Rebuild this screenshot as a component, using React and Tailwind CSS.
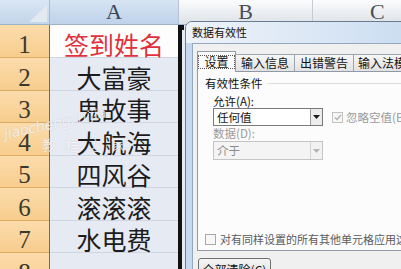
import React from 'react';

const rows = [
  { n: '1', name: '签到姓名', h: 'h-[33px]', first: true },
  { n: '2', name: '大富豪', h: 'h-[33px]' },
  { n: '3', name: '鬼故事', h: 'h-[32px]' },
  { n: '4', name: '大航海', h: 'h-[33px]' },
  { n: '5', name: '四风谷', h: 'h-[32px]' },
  { n: '6', name: '滚滚滚', h: 'h-[33px]' },
  { n: '7', name: '水电费', h: 'h-[32px]' },
  { n: '8', name: '', h: 'h-[33px]' },
];

const tabs = ['输入信息', '出错警告', '输入法模式'];

function Arrow({ disabled }) {
  return (
    <div
      className={
        'w-[12px] flex items-center justify-center border-l ' +
        (disabled ? 'border-[#d6d6d6] bg-[#f2f2f2]' : 'border-[#9a9a9a] bg-[#ececec]')
      }
    >
      <svg width="7" height="4" viewBox="0 0 7 4">
        <path d="M0 0h7L3.5 4z" fill={disabled ? '#b5b5b5' : '#1a1a1a'} />
      </svg>
    </div>
  );
}

export default function App() {
  return (
    <div className="relative w-[401px] h-[269px] overflow-hidden bg-white font-['Noto_Sans_CJK_SC',sans-serif]">
      {/* Sheet header */}
      <div className="flex h-[25px] border-b border-[#9eb1c8]">
        <div className="relative w-[50px] border-r border-[#a8bcd3] bg-gradient-to-b from-[#d9e6f4] to-[#c3d5ea]">
          <svg className="absolute right-[2px] bottom-[2px]" width="18" height="17" viewBox="0 0 18 17">
            <path d="M18 0V17H0z" fill="#e3e9f0" />
          </svg>
        </div>
        <div className="w-[129px] border-r border-[#b4c4d6] bg-gradient-to-b from-[#d7e4f3] to-[#bed2ea] flex items-center justify-center font-['Liberation_Serif',serif] text-[22px] leading-none text-[#3b4654]">
          A
        </div>
        <div className="w-[134px] border-r border-[#c8ccd2] bg-gradient-to-b from-[#fbfcfd] to-[#dde2e8] flex items-center justify-center font-['Liberation_Serif',serif] text-[22px] leading-none text-[#4a4f56]">
          B
        </div>
        <div className="flex-1 bg-gradient-to-b from-[#fbfcfd] to-[#dde2e8] flex items-center pl-[57px] font-['Liberation_Serif',serif] text-[22px] leading-none text-[#4a4f56]">
          C
        </div>
      </div>

      {/* Sheet body */}
      <div className="flex">
        <div className="w-[50px] flex flex-col border-r border-[#7d6a4c]">
          {rows.map((r) => (
            <div
              key={r.n}
              className={
                r.h +
                ' flex items-end justify-center border-b border-[#dcab63] bg-gradient-to-b from-[#fcdcab] to-[#f7cd8e] font-[\'Liberation_Serif\',serif] text-[25px] leading-none text-[#3a3a2c]'
              }
            >
              {r.n}
            </div>
          ))}
        </div>
        <div className="w-[128px] flex flex-col">
          {rows.map((r) => (
            <div
              key={r.n}
              className={
                r.h +
                ' flex items-end justify-center border-b border-[#cfd6e2] text-[25px] leading-none ' +
                (r.first ? 'bg-[#fdfdfd] text-[#e0313c]' : 'bg-[#e6eaf3] text-[#1c1c1c]')
              }
            >
              {r.name}
            </div>
          ))}
        </div>
        <div className="w-[4px] bg-[#111]" />
        <div className="flex-1 bg-[#e4ebf4]" />
      </div>

      {/* fill handle */}
      <div className="absolute left-[178px] top-[25px] w-[6px] h-[5px] bg-[#111]" />

      {/* watermark */}
      <div className="absolute left-[4px] top-[124px] -rotate-[12deg] origin-left text-[14px] italic text-white/75 font-['DejaVu_Sans',sans-serif] [text-shadow:0_0_1px_rgba(140,140,160,0.4)]">
        jiaochengzhijia
      </div>
      <div className="absolute left-[42px] top-[134px] text-[14px] tracking-[9px] text-white/75 [text-shadow:0_0_1px_rgba(140,140,160,0.4)]">
        教程之家
      </div>

      {/* Dialog window */}
      <div className="absolute left-[185px] top-[21px] w-[240px] h-[262px] rounded-tl-[7px] border border-[#6b7c91] bg-[#c6d8ed] flex flex-col">
        <div className="h-[23px] flex items-center pl-[6px] rounded-tl-[6px] bg-gradient-to-r from-[#eef3f9] via-[#dde8f5] to-[#c8dbf1] text-[11px] text-[#111]">
          数据有效性
        </div>
        <div className="flex-1 ml-[6px] border-l border-t border-[#95a8bf] bg-[#f0f0f0] flex flex-col pl-[4px] pt-[7px]">
          {/* tabs */}
          <div className="flex items-end h-[20px]">
            <div className="w-[48px] h-[21px] -mb-px relative z-10 border border-b-0 border-[#8e9aa8] bg-[#fcfcfc] flex items-center justify-center">
              <div className="px-[5px] leading-[12px] border border-dotted border-[#555] text-[12px] text-[#111]">
                设置
              </div>
            </div>
            {tabs.map((t, i) => (
              <div
                key={t}
                className={
                  'h-[17px] shrink-0 border border-b-0 border-l-0 border-[#9aa5b2] bg-gradient-to-b from-[#f6f6f6] to-[#e2e2e2] flex items-center text-[12px] leading-none text-[#111] whitespace-nowrap ' +
                  (i === 2 ? 'w-[70px] pl-[4px]' : 'w-[59px] justify-center')
                }
              >
                {t}
              </div>
            ))}
          </div>

          {/* panel */}
          <div className="h-[180px] border border-r-0 border-[#8e9aa8] bg-[#fcfcfc] flex flex-col pl-[7px] pt-[4px] text-[11.5px] leading-[14px]">
            <div className="flex items-center h-[14px]">
              <span className="text-[#111]">有效性条件</span>
              <div className="flex-1 h-px bg-[#dedede] ml-[4px]" />
            </div>
            <div className="mt-[4px] pl-[8px] h-[14px] text-[#111]">允许(A):</div>
            <div className="flex items-center pl-[8px] h-[18px]">
              <div className="shrink-0 w-[110px] h-[18px] border border-[#7a7a7a] bg-white flex">
                <span className="flex-1 pl-[3px] leading-[16px] text-[#111]">任何值</span>
                <Arrow />
              </div>
              <div className="shrink-0 ml-[9px] w-[11px] h-[11px] border border-[#c2c2c2] bg-[#f6f6f6] flex items-center justify-center">
                <svg width="8" height="7" viewBox="0 0 8 7">
                  <path d="M1 3.5l2 2L7 1" stroke="#b0b0b0" strokeWidth="1.3" fill="none" />
                </svg>
              </div>
              <span className="ml-[3px] text-[#9a9a9a] whitespace-nowrap">忽略空值(B)</span>
            </div>
            <div className="pl-[8px] h-[15px] text-[#9a9a9a]">数据(D):</div>
            <div className="pl-[8px]">
              <div className="w-[110px] h-[19px] border border-[#c4c4c4] bg-[#f4f4f4] flex">
                <span className="flex-1 pl-[3px] leading-[17px] text-[#8c8c8c]">介于</span>
                <Arrow disabled />
              </div>
            </div>
            <div className="flex-1" />
            <div className="flex items-center h-[12px] mb-[5px] whitespace-nowrap">
              <div className="shrink-0 w-[11px] h-[11px] border border-[#a9a9a9] bg-[#f7f7f7]" />
              <span className="ml-[4px] text-[11px] text-[#5a5a5a]">对有同样设置的所有其他单元格应用这些更改(P)</span>
            </div>
          </div>

          {/* bottom buttons */}
          <div className="mt-[7px] flex">
            <div className="w-[73px] h-[24px] ml-[1px] rounded-[3px] border border-[#707070] bg-gradient-to-b from-[#f4f4f4] to-[#dcdcdc] flex items-center justify-center text-[12px] text-[#111]">
              全部清除(C)
            </div>
          </div>
        </div>
      </div>
    </div>
  );
}
